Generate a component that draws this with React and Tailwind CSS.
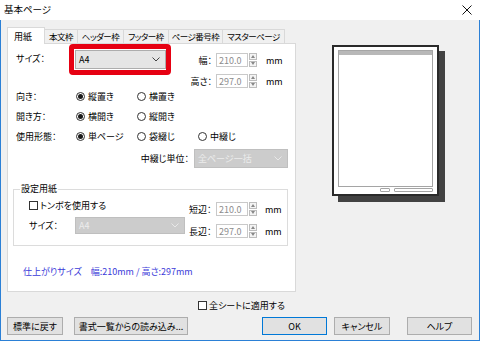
import React from "react";

function Chevron({ color = "#444" }) {
  return (
    <svg width="8" height="5" viewBox="0 0 8 5">
      <polyline points="0.5,0.5 4,4 7.5,0.5" fill="none" stroke={color} strokeWidth="1" />
    </svg>
  );
}

function Spin({ value }) {
  return (
    <div className="flex items-center">
      <div className="w-[32px] h-[14px] border border-[#c9c9c9] bg-white text-[#8c8c8c] text-[9px] flex items-center pl-[2px]">
        {value}
      </div>
      <div className="ml-[1px] w-[8px] h-[14px] flex flex-col gap-[1px]">
        <div className="flex-1 border border-[#bdbdbd] bg-[#f4f4f4] flex items-center justify-center">
          <svg width="4" height="3" viewBox="0 0 4 3"><path d="M0 3 L2 0 L4 3Z" fill="#888" /></svg>
        </div>
        <div className="flex-1 border border-[#bdbdbd] bg-[#f4f4f4] flex items-center justify-center">
          <svg width="4" height="3" viewBox="0 0 4 3"><path d="M0 0 L2 3 L4 0Z" fill="#888" /></svg>
        </div>
      </div>
    </div>
  );
}

function Radio({ checked, label }) {
  return (
    <div className="flex items-center w-[61px]">
      <span className="w-[9px] h-[9px] rounded-full border border-[#333] bg-white flex items-center justify-center">
        {checked && <span className="w-[5px] h-[5px] rounded-full bg-[#1a1a1a]" />}
      </span>
      <span className="ml-[3px]">{label}</span>
    </div>
  );
}

function Check({ label }) {
  return (
    <div className="flex items-center">
      <span className="w-[9px] h-[9px] border border-[#333] bg-white" />
      <span className="ml-[2px]">{label}</span>
    </div>
  );
}

function Btn({ w, children, focus }) {
  return (
    <div
      className={
        "h-[18px] flex items-center justify-center bg-[#e1e1e1] border " +
        (focus ? "border-[#0078d7]" : "border-[#adadad]")
      }
      style={{ width: w }}
    >
      {children}
    </div>
  );
}

export default function App() {
  const tabs = [
    ["本文枠", 33],
    ["ヘッダー枠", 46],
    ["フッター枠", 45],
    ["ページ番号枠", 54],
    ["マスターページ", 62],
  ];
  return (
    <div className="w-[480px] h-[343px] bg-white font-['Noto_Sans_CJK_JP',sans-serif] [font-feature-settings:'palt'_1] text-[9px] leading-none text-black whitespace-nowrap overflow-hidden">
      <div className="h-[341px] flex flex-col">
        {/* title bar */}
        <div className="h-[20px] shrink-0 bg-white flex items-center justify-between pl-[4px] pr-[8px]">
          <span className="text-[9.5px]">基本ページ</span>
          <svg width="10" height="10" viewBox="0 0 10 10">
            <path d="M0.5 0.5 L9.5 9.5 M9.5 0.5 L0.5 9.5" stroke="#111" strokeWidth="1" />
          </svg>
        </div>

        {/* body */}
        <div className="flex-1 bg-[#f0f0f0] border-x border-b border-[#2b80d6] flex flex-col pl-[6px] pt-[7px]">
          {/* tabs */}
          <div className="h-[16px] flex items-end">
            <div className="relative z-10 -mb-px w-[38px] h-[17px] bg-white border-x border-t border-[#d9d9d9] flex items-center pl-[6px]">
              用紙
            </div>
            {tabs.map(([t, w]) => (
              <div
                key={t}
                className="h-[14px] border-t border-r border-[#d9d9d9] bg-[#f0f0f0] flex items-center justify-center text-[8.5px] tracking-[-0.5px]"
                style={{ width: w }}
              >
                {t}
              </div>
            ))}
          </div>

          {/* main row */}
          <div className="flex h-[249px]">
            <div className="w-[289px] h-[249px] border border-[#d9d9d9] bg-white flex flex-col">
              {/* size row */}
              <div className="h-[42px] flex items-start pt-[6px] pl-[8px]">
                <div className="w-[59px] h-[17px] flex items-center">サイズ：</div>
                <div className="relative w-[91px] h-[19px] bg-[#e5e5e5] border border-[#adadad] flex items-center justify-between pl-[3px] pr-[5px]">
                  <span>A4</span>
                  <Chevron />
                  <div className="absolute -left-[7px] -top-[7px] -right-[6px] -bottom-[7px] border-[5px] border-[#e60012] rounded-[4px]" />
                </div>
                <div className="ml-[6px] mt-[3px] flex flex-col gap-[7px]">
                  <div className="flex items-center h-[14px]">
                    <span className="w-[44px] text-right pr-[4px]">幅：</span>
                    <Spin value="210.0" />
                    <span className="ml-[9px]">mm</span>
                  </div>
                  <div className="flex items-center h-[14px]">
                    <span className="w-[44px] text-right pr-[4px]">高さ：</span>
                    <Spin value="297.0" />
                    <span className="ml-[9px]">mm</span>
                  </div>
                </div>
              </div>

              {/* radio rows */}
              <div className="h-[20px] flex items-center pl-[8px]">
                <span className="w-[60px]">向き：</span>
                <Radio checked label="縦置き" />
                <Radio label="横置き" />
              </div>
              <div className="h-[20px] flex items-center pl-[8px]">
                <span className="w-[60px]">開き方：</span>
                <Radio checked label="横開き" />
                <Radio label="縦開き" />
              </div>
              <div className="h-[20px] flex items-center pl-[8px]">
                <span className="w-[60px]">使用形態：</span>
                <Radio checked label="単ページ" />
                <Radio label="袋綴じ" />
                <Radio label="中綴じ" />
              </div>
              <div className="mt-[3px] h-[19px] flex items-center justify-end pr-[7px]">
                <span>中綴じ単位：</span>
                <div className="ml-[5px] w-[94px] h-[19px] bg-[#cccccc] border border-[#bfbfbf] flex items-center justify-between pl-[3px] pr-[5px] text-[#ececec]">
                  <span>全ページ一括</span>
                  <Chevron color="#e8e8e8" />
                </div>
              </div>

              {/* group box */}
              <div className="relative mt-[21px] ml-[5px] w-[275px] h-[57px] border border-[#dcdcdc] flex">
                <span className="absolute -top-[6px] left-[6px] bg-white px-[1px]">設定用紙</span>
                <div className="w-[175px] pl-[15px] pt-[11px] flex flex-col">
                  <Check label="トンボを使用する" />
                  <div className="mt-[7px] flex items-center">
                    <span className="w-[46px]">サイズ：</span>
                    <div className="w-[110px] h-[17px] bg-[#cccccc] border border-[#bfbfbf] flex items-center justify-between pl-[3px] pr-[5px] text-[#ececec]">
                      <span>A4</span>
                      <Chevron color="#e8e8e8" />
                    </div>
                  </div>
                </div>
                <div className="pt-[12px] flex flex-col gap-[8px]">
                  <div className="flex items-center h-[14px]">
                    <span className="w-[27px]">短辺：</span>
                    <Spin value="210.0" />
                    <span className="ml-[8px]">mm</span>
                  </div>
                  <div className="flex items-center h-[14px]">
                    <span className="w-[27px]">長辺：</span>
                    <Spin value="297.0" />
                    <span className="ml-[8px]">mm</span>
                  </div>
                </div>
              </div>

              <div className="mt-[21px] ml-[15px] text-[#3b3bd9] flex">
                <span>仕上がりサイズ</span>
                <span className="ml-[9px]">幅:210mm / 高さ:297mm</span>
              </div>
            </div>

            {/* preview */}
            <div className="pl-[36px] pt-[2px]">
              <div className="w-[107px] h-[151px] bg-white border-2 border-[#2a2a2a] shadow-[6px_6px_0_#424242] flex flex-col pt-[3px] px-[4px] pb-[1px]">
                <div className="flex-1 border border-[#a5a5a5] flex flex-col">
                  <div className="h-[4px] bg-[#b8b8b8]" />
                </div>
                <div className="h-[5px] mt-[1px] flex justify-end gap-[4px]">
                  <div className="w-[10px] h-[4px] border border-[#a5a5a5] rounded-[1px]" />
                  <div className="w-[39px] h-[4px] border border-[#a5a5a5] rounded-[1px]" />
                </div>
              </div>
            </div>
          </div>

          {/* apply all */}
          <div className="mt-[5px] h-[16px] ml-[191px] flex items-center">
            <Check label="全シートに適用する" />
          </div>

          {/* buttons */}
          <div className="mt-[4px] flex">
            <Btn w={56}>標準に戻す</Btn>
            <div className="ml-[11px]"><Btn w={114}>書式一覧からの読み込み...</Btn></div>
            <div className="ml-[74px]"><Btn w={65} focus>OK</Btn></div>
            <div className="ml-[7px]"><Btn w={56}>キャンセル</Btn></div>
            <div className="ml-[17px]"><Btn w={65}>ヘルプ</Btn></div>
          </div>
        </div>
      </div>
    </div>
  );
}
